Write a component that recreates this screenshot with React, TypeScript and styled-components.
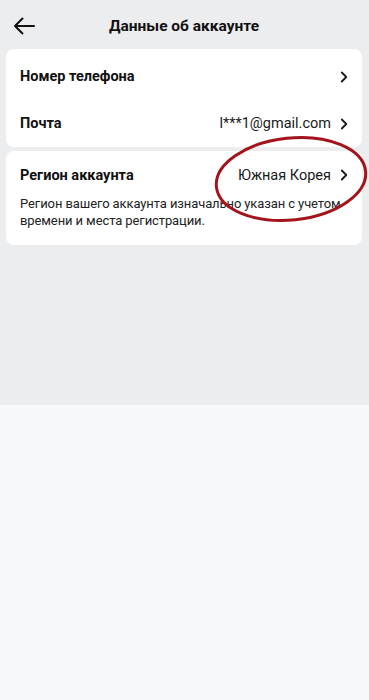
import React from "react";
import styled, { createGlobalStyle } from "styled-components";

const GlobalStyle = createGlobalStyle`
  html, body {
    margin: 0;
    padding: 0;
    background: #f7f8fa;
  }
  body {
    font-family: Roboto, "Noto Sans", "Liberation Sans", sans-serif;
    color: #111;
  }
`;

type RowProps = {
  label: string;
  value?: string;
};

const Chevron = () => (
  <svg width="8" height="12" viewBox="0 0 8 12" fill="none">
    <path d="M1.8 1.5L6.3 6L1.8 10.5" stroke="#1a1a1a" strokeWidth="1.8" strokeLinecap="round" strokeLinejoin="round" />
  </svg>
);

const BackArrow = () => (
  <svg width="22" height="18" viewBox="0 0 22 18" fill="none">
    <path d="M21 9H2M9.5 1.5L2 9l7.5 7.5" stroke="#111" strokeWidth="2" strokeLinecap="round" strokeLinejoin="round" />
  </svg>
);

const Row = (props: RowProps) => {
  return (
    <StyledRow>
      <Label>{props.label}</Label>
      <Value>
        {props.value && <span>{props.value}</span>}
        <Chevron />
      </Value>
    </StyledRow>
  );
};

export default function App() {
  return (
    <Page>
      <GlobalStyle />
      <Top>
        <Header>
          <BackButton>
            <BackArrow />
          </BackButton>
          <Title>Данные об аккаунте</Title>
        </Header>

        <Card>
          <Row label="Номер телефона" />
          <Row label="Почта" value="l***1@gmail.com" />
        </Card>

        <RegionCard>
          <RegionRow>
            <Label>Регион аккаунта</Label>
            <Value>
              <span>Южная Корея</span>
              <Chevron />
            </Value>
          </RegionRow>
          <Hint>
            Регион вашего аккаунта изначально указан с учетом времени и места
            регистрации.
          </Hint>
          <Mark width="160" height="92" viewBox="0 0 160 92">
            <ellipse cx="79" cy="46" rx="75" ry="41" transform="rotate(-6 79 46)" fill="none" stroke="#a3141d" strokeWidth="3" />
          </Mark>
        </RegionCard>
      </Top>
      <Bottom />
    </Page>
  );
}

const Page = styled.div`
  display: flex;
  flex-direction: column;
  min-height: 700px;
`;

const Top = styled.div`
  height: 405px;
  background: #ecedef;
  padding: 0 7px 0 6px;
  box-sizing: border-box;
  display: flex;
  flex-direction: column;
`;

const Bottom = styled.div`
  flex: 1;
  background: #f7f8fa;
`;

const Header = styled.div`
  position: relative;
  height: 49px;
  display: flex;
  align-items: center;
  justify-content: center;
`;

const BackButton = styled.div`
  position: absolute;
  left: 7px;
  top: 17px;
  display: flex;
`;

const Title = styled.h1`
  margin: 3px 0 0;
  font-size: 15.5px;
  font-weight: 700;
  color: #111;
`;

const Card = styled.div`
  background: #fff;
  border-radius: 8px;
  padding: 4px 0 0;
`;

const StyledRow = styled.div`
  height: 47px;
  display: flex;
  align-items: center;
  justify-content: space-between;
  padding: 0 14px 0 14px;
`;

const Label = styled.span`
  font-size: 14.5px;
  font-weight: 700;
  color: #111;
`;

const Value = styled.span`
  display: flex;
  align-items: center;
  gap: 9px;
  font-size: 14.5px;
  color: #1a1a1a;
`;

const RegionCard = styled.div`
  position: relative;
  margin-top: 4px;
  background: #fff;
  border-radius: 8px;
  padding: 14px 14px 16px 14px;
`;

const RegionRow = styled.div`
  height: 20px;
  display: flex;
  align-items: center;
  justify-content: space-between;
`;

const Hint = styled.p`
  margin: 10px 0 0;
  font-size: 13px;
  letter-spacing: -0.1px;
  line-height: 17px;
  color: #222;
`;

const Mark = styled.svg`
  position: absolute;
  right: -10px;
  top: -18px;
  pointer-events: none;
`;
